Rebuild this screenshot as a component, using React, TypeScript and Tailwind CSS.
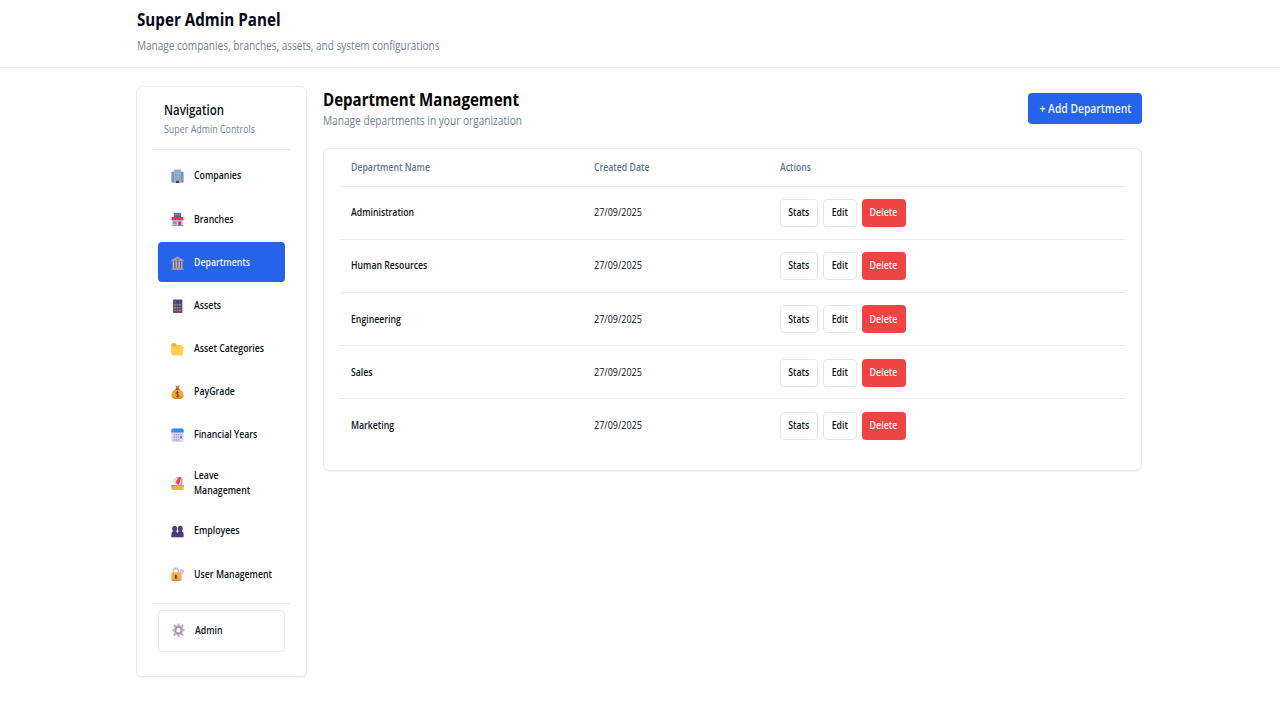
import React from 'react';

type IconProps = { children: React.ReactNode };
const Glyph = ({ children }: IconProps) => (
  <svg viewBox="0 0 32 32" preserveAspectRatio="none" className="h-[14.5px] w-[13px] shrink-0">
    {children}
  </svg>
);

const Office = () => (
  <Glyph>
    <path d="M1 8a2 2 0 0 1 2-2h26a2 2 0 0 1 2 2v22H1z" fill="#8e8497" />
    <path d="M7 3a2 2 0 0 1 2-2h14a2 2 0 0 1 2 2v28H7z" fill="#b4a9bd" />
    <path d="M10 4h3v5h-3zM15 4h3v5h-3zM20 4h3v5h-3zM10 11h3v5h-3zM15 11h3v5h-3zM20 11h3v5h-3zM10 18h3v5h-3zM15 18h3v5h-3zM20 18h3v5h-3zM3 10h2v17H3zM27 10h2v17h-2z" fill="#3cbcf4" />
    <path d="M12 26h8v5h-8z" fill="#493a58" />
  </Glyph>
);
const Store = () => (
  <Glyph>
    <path d="M7 2h18v9H7z" fill="#635994" />
    <path d="M9 4h3v3H9zM14 4h3v3h-3zM19 4h3v3h-3z" fill="#a697c9" />
    <path d="M3 17h26v13H3z" fill="#cdc4d6" />
    <path d="M2 11h28l1 7H1z" fill="#e9364f" />
    <path d="M5 21h9v6H5z" fill="#4da9e8" />
    <path d="M18 21h7v9h-7z" fill="#6c5b7b" />
    <path d="M2 29h28v2H2z" fill="#998ea4" />
  </Glyph>
);
const Bank = () => (
  <Glyph>
    <path d="M16 1 31 9v3H1V9z" fill="#a79db0" />
    <path d="M4 12h24v15H4z" fill="#5e5575" />
    <path d="M4 12h4v15H4zM11 12h4v15h-4zM18 12h4v15h-4zM25 12h3v15h-3z" fill="#c1b8c9" />
    <path d="M3 26h26v2H3zM1 28h30v3H1z" fill="#9b93a3" />
    <circle cx="16" cy="8" r="2" fill="#756b80" />
  </Glyph>
);
const Abacus = () => (
  <Glyph>
    <rect x="5" y="1" width="23" height="30" rx="2" fill="#674690" />
    <path d="M8 4h17v5H8z" fill="#483060" />
    <path d="M8 11h17v17H8z" fill="#41405f" />
    <path d="M8 11h4v4H8zM20 17h4v4h-4zM14 23h4v4h-4z" fill="#e76b4a" />
    <path d="M14 11h4v4h-4zM8 23h4v4H8zM20 11h4v4h-4z" fill="#4fa4d4" />
    <path d="M8 17h4v4H8zM14 17h4v4h-4zM20 23h4v4h-4z" fill="#d09a54" />
    <path d="M10 5h3v3h-3zM19 5h3v3h-3z" fill="#9d5a96" />
  </Glyph>
);
const Folder = () => (
  <Glyph>
    <path d="M1 6q0-3 3-3h6q2 0 3 2l1 2h11q3 0 3 3v17H4q-3 0-3-3z" fill="#f5b02c" />
    <path d="M5 30q-3 0-3-3V13q0-3 3-3h9l3-2h11q3 0 3 3l-2 16q0 3-3 3z" fill="#ffce51" />
  </Glyph>
);
const MoneyBag = () => (
  <Glyph>
    <path d="m11 1 5 2 5-2-2 9h-6z" fill="#d97e28" />
    <path d="M12 9h8c7 3 11 9 11 14 0 6-5 8-15 8S1 29 1 23c0-5 4-11 11-14z" fill="#f5a52c" />
    <path d="M3 25c6 4 18 4 26-2-1 6-5 8-13 8S4 29 3 25z" fill="#df7d2b" />
    <path d="M11 8h10v3H11z" fill="#8d4940" />
    <path d="M19 17c-2-3-7-2-7 1s8 2 8 5-6 4-8 1M16 14v13" fill="none" stroke="#6d3938" strokeWidth="2" />
  </Glyph>
);
const Calendar = () => (
  <Glyph>
    <rect x="1" y="1" width="30" height="30" rx="4" fill="#ddd2ee" />
    <path d="M1 10V5q0-4 4-4h22q4 0 4 4v5z" fill="#2a92f5" />
    <path d="M7 13h3v3H7zM12 13h3v3h-3zM17 13h3v3h-3zM7 19h3v3H7zM12 19h3v3h-3zM17 19h3v3h-3zM7 25h3v3H7zM12 25h3v3h-3zM17 25h3v3h-3zM23 13h3v3h-3z" fill="#a895c3" />
    <path d="M22 18h5v5h-5z" fill="#2a92f5" />
  </Glyph>
);
const Beach = () => (
  <Glyph>
    <path d="M1 20h30v5H1z" fill="#36a8ef" />
    <path d="M1 25q13-7 30-1v5q0 2-3 2H4q-3 0-3-3z" fill="#ffb52e" />
    <path d="m18 11-5 14" stroke="#b9a2b1" strokeWidth="2" />
    <path d="M6 12C9 3 18 0 25 3c6 4 5 13 0 20z" fill="#ef4058" />
    <path d="M6 12C9 5 14 2 20 3c-4 2-7 7-8 12zM25 3c-1 6-3 11-6 16l6 4c5-7 6-14 0-20z" fill="#f5dbe5" />
    <path d="M25 3c2 6 2 11 0 20l-2-2c3-7 3-12 2-18z" fill="#ef4058" />
  </Glyph>
);
const People = () => (
  <Glyph>
    <path d="M3 11q0-7 6-7t6 7l-2 6H5zM17 11q0-7 6-7t6 7l-2 6h-8z" fill="#533a83" />
    <path d="M1 29v-7q0-6 5-6h5q5 0 5 5 0-5 5-5h5q5 0 5 6v7z" fill="#4b3177" />
    <path d="M6 21v8M12 21v8M20 21v8M26 21v8" stroke="#765da1" strokeWidth="1.2" />
  </Glyph>
);
const Lock = () => (
  <Glyph>
    <path d="M21 9q2-6 8-4 5 3 1 9l-4 3 1 12-5 2z" fill="#d2bfe1" />
    <path d="M6 15V9q0-6 6-6t6 6v6" fill="none" stroke="#c9bdd5" strokeWidth="3.5" />
    <rect x="1" y="12" width="23" height="19" rx="3" fill="#f9ad36" />
    <path d="M2 27h21v2q-1 2-3 2H4q-2 0-2-2z" fill="#ef8a36" />
    <path d="M12 17a3 3 0 0 1 2 5v4h-4v-4a3 3 0 0 1 2-5z" fill="#50384e" />
  </Glyph>
);
const Gear = () => (
  <Glyph>
    <path
      d="M14 1h4l1 4 3 1 4-3 3 3-3 4 1 3 4 1v4l-4 1-1 3 3 4-3 3-4-3-3 1-1 4h-4l-1-4-3-1-4 3-3-3 3-4-1-3-4-1v-4l4-1 1-3-3-4 3-3 4 3 3-1zM16 11a5 5 0 1 0 0 10 5 5 0 0 0 0-10z"
      fill="#c0b0cf"
      fillRule="evenodd"
    />
    <circle cx="16" cy="16" r="7" fill="none" stroke="#a18fb3" strokeWidth="2.5" />
  </Glyph>
);

const navItems = [
  { label: 'Companies', icon: <Office /> },
  { label: 'Branches', icon: <Store /> },
  { label: 'Departments', icon: <Bank />, active: true },
  { label: 'Assets', icon: <Abacus /> },
  { label: 'Asset Categories', icon: <Folder /> },
  { label: 'PayGrade', icon: <MoneyBag /> },
  { label: 'Financial Years', icon: <Calendar /> },
  { label: 'Leave Management', icon: <Beach />, lines: ['Leave', 'Management'] },
  { label: 'Employees', icon: <People /> },
  { label: 'User Management', icon: <Lock /> },
];

const departments = ['Administration', 'Human Resources', 'Engineering', 'Sales', 'Marketing'];

function Sidebar() {
  return (
    <aside className="h-[591px] w-[171px] shrink-0 rounded-md border border-[#e8eaee] px-4 pt-[14px] shadow-xs">
      <div className="h-[49px] border-b border-[#e8eaee] pl-[10.5px]">
        <h2 className="origin-left scale-x-[.85] text-[13.5px] leading-[19px] font-semibold whitespace-nowrap">Navigation</h2>
        <p className="origin-left scale-x-[.846] pt-px text-[10.5px] leading-[17px] whitespace-nowrap text-[#738296]">Super Admin Controls</p>
      </div>
      <nav className="flex flex-col gap-[3.2px] px-[5px] pt-[6px]">
        {navItems.map((item) => (
          <button
            key={item.label}
            className={`flex w-[127px] items-center rounded pl-[12.5px] text-left text-[10.5px] font-semibold ${
              item.lines ? 'h-[49.5px]' : 'h-10'
            } ${item.active ? 'bg-[#2563eb] text-[#eef3ff]' : ''}`}
          >
            <span className="mr-[10.2px] flex pt-px">{item.icon}</span>
            <span className="origin-left scale-x-[.835] leading-[15.3px] whitespace-nowrap">
              {(item.lines ?? [item.label]).map((line) => (
                <span key={line} className="block">{line}</span>
              ))}
            </span>
          </button>
        ))}
      </nav>
      <div className="mt-[8.5px] border-t border-[#e8eaee] px-[5px] pt-[6px]">
        <button className="flex h-[42px] w-[127px] items-center rounded border border-[#e8ebf1] pl-[12.5px] text-[10.5px] font-semibold">
          <span className="mr-[10.2px] flex"><Gear /></span>
          <span className="origin-left scale-x-[.835]">Admin</span>
        </button>
      </div>
    </aside>
  );
}

function DepartmentTable() {
  return (
    <section className="mt-[18.5px] h-[323px] rounded-md border border-[#e6e9ee] px-4 shadow-xs">
      <div className="grid h-[38px] grid-cols-[254px_186px_1fr] items-center border-b border-[#e8eaee] pt-px pl-[10.5px] text-[10.5px] font-semibold text-[#64748b]">
        <span className="origin-left scale-x-[.83]">Department Name</span>
        <span className="-ml-[11px] origin-left scale-x-[.83]">Created Date</span>
        <span className="-ml-[11px] origin-left scale-x-[.83]">Actions</span>
      </div>
      {departments.map((name) => (
        <div
          key={name}
          className="grid h-[53.2px] grid-cols-[254px_186px_1fr] items-center border-b border-[#e8eaee] pt-px pl-[10.5px] text-[10.5px] last:border-b-0"
        >
          <span className="origin-left scale-x-[.83] font-semibold">{name}</span>
          <span className="-ml-[11px] origin-left scale-x-[.86]">27/09/2025</span>
          <div className="-ml-[11px] flex gap-[5px] font-semibold">
            <button className="flex h-7 w-[38px] items-center justify-center rounded border border-[#e5e8ee]">
              <span className="scale-x-[.83]">Stats</span>
            </button>
            <button className="flex h-7 w-[34px] items-center justify-center rounded border border-[#e5e8ee]">
              <span className="scale-x-[.83]">Edit</span>
            </button>
            <button className="flex h-7 w-[44px] items-center justify-center rounded bg-[#ef4444] text-[#fff0f0]">
              <span className="scale-x-[.85]">Delete</span>
            </button>
          </div>
        </div>
      ))}
    </section>
  );
}

export default function App() {
  return (
    <div className="h-[720px] overflow-hidden bg-white font-['Open_Sans','Noto_Sans',sans-serif] text-[#0b1220]">
      <header className="h-[68px] border-b border-[#e8eaee] pt-[6px] pl-[136.5px]">
        <h1 className="origin-left scale-x-[.843] text-[18px] leading-[26px] font-bold whitespace-nowrap text-[#020817]">Super Admin Panel</h1>
        <p className="mt-[5px] origin-left scale-x-[.836] text-[12px] leading-[18px] whitespace-nowrap text-[#738296]">
          Manage companies, branches, assets, and system configurations
        </p>
      </header>
      <div className="flex gap-[16px] pt-[18px] pl-[136.4px]">
        <Sidebar />
        <main className="w-[818.5px]">
          <div className="flex items-start justify-between pt-[2px]">
            <div>
              <h2 className="origin-left scale-x-[.837] text-[18px] leading-[23px] font-bold whitespace-nowrap text-black">Department Management</h2>
              <p className="origin-left scale-x-[.845] pt-px text-[12px] leading-[17px] whitespace-nowrap text-[#738296]">Manage departments in your organization</p>
            </div>
            <button className="mt-[4.5px] flex h-[31px] w-[114px] items-center justify-center rounded bg-[#2563eb] pt-px text-[12px] font-semibold whitespace-nowrap text-[#f0f4ff]">
              <span className="scale-x-[.86]">+ Add Department</span>
            </button>
          </div>
          <DepartmentTable />
        </main>
      </div>
    </div>
  );
}
